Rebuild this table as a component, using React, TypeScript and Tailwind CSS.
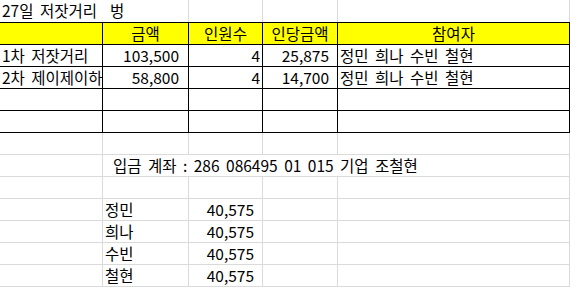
import React from "react";

type Line = "black" | "gray" | "none";

type Cell = {
  w: number;
  left?: Line;
  text?: string;
  align?: "left" | "right" | "center";
  pad?: string;
  bg?: string;
  clip?: boolean;
};

const lineCls: Record<Line, string> = {
  black: "border-l border-black",
  gray: "border-l border-[#dadada]",
  none: "",
};

const topCls: Record<Line, string> = {
  black: "border-t border-black",
  gray: "border-t border-[#dadada]",
  none: "",
};

const alignCls = {
  left: "justify-start",
  right: "justify-end",
  center: "justify-center",
};

const SheetRow = ({ top, cells }: { top: Line; cells: Cell[] }) => (
  <div className={`flex h-[22px] ${topCls[top]}`}>
    {cells.map((c, i) => (
      <div
        key={i}
        style={{ width: c.w }}
        className={`flex shrink-0 items-center whitespace-pre ${lineCls[c.left ?? "none"]} ${alignCls[c.align ?? "left"]} ${c.pad ?? "px-[2px]"} ${c.bg ?? ""} ${c.clip ? "overflow-hidden" : ""}`}
      >
        {c.text}
      </div>
    ))}
  </div>
);

// column widths: A 102, B 86, C 74, D 75, E 232, then the F edge
const blank = (g: Line): Cell[] => [
  { w: 102 },
  { w: 86, left: g },
  { w: 74, left: g },
  { w: 75, left: g },
  { w: 232, left: g },
  { w: 1, left: g },
];

const people = "정민 희나 수빈 철현";

const dataRow = (name: string, amount: string, count: string, each: string): Cell[] => [
  { w: 102, text: name, pad: "pl-[2px]", clip: true },
  { w: 86, left: "black", text: amount, align: "right", pad: "pr-[9px]" },
  { w: 74, left: "black", text: count, align: "right", pad: "pr-[2px]" },
  { w: 75, left: "black", text: each, align: "right", pad: "pr-[8px]" },
  { w: 232, left: "black", text: people, pad: "pl-[2px]" },
  { w: 1, left: "black" },
];

const payRow = (name: string): Cell[] => [
  { w: 102 },
  { w: 86, left: "gray", text: name, pad: "pl-[2px]" },
  { w: 74, left: "gray", text: "40,575", align: "right", pad: "pr-[8px]" },
  { w: 75, left: "gray" },
  { w: 232, left: "gray" },
  { w: 1, left: "gray" },
];

export default function App() {
  return (
    <div
      className="w-[570px] h-[287px] overflow-hidden bg-white text-black text-[15.5px] leading-none [word-spacing:3px]"
      style={{ fontFamily: '"Noto Sans CJK KR", "Noto Sans", sans-serif' }}
    >
      <SheetRow
        top="none"
        cells={[
          { w: 188, text: "27일 저잣거리  벙", pad: "pl-[2px]" },
          { w: 74, left: "gray" },
          { w: 75, left: "gray" },
          { w: 232, left: "gray" },
          { w: 1, left: "gray" },
        ]}
      />
      <SheetRow
        top="black"
        cells={[
          { w: 102, bg: "bg-[#ffff00]" },
          { w: 86, left: "black", text: "금액", align: "center", bg: "bg-[#ffff00]" },
          { w: 74, left: "black", text: "인원수", align: "center", bg: "bg-[#ffff00]" },
          { w: 75, left: "black", text: "인당금액", align: "center", bg: "bg-[#ffff00]" },
          { w: 232, left: "black", text: "참여자", align: "center", bg: "bg-[#ffff00]" },
          { w: 1, left: "black" },
        ]}
      />
      <SheetRow top="black" cells={dataRow("1차 저잣거리", "103,500", "4", "25,875")} />
      <SheetRow top="black" cells={dataRow("2차 제이제이하우스", "58,800", "4", "14,700")} />
      <SheetRow top="black" cells={blank("black")} />
      <SheetRow top="black" cells={blank("black")} />
      <SheetRow top="black" cells={blank("gray")} />
      <SheetRow
        top="gray"
        cells={[
          { w: 102 },
          { w: 467, left: "gray", text: "입금 계좌 : 286 086495 01 015 기업 조철현", pad: "pl-[10px]" },
          { w: 1, left: "gray" },
        ]}
      />
      <SheetRow top="gray" cells={blank("gray")} />
      <SheetRow top="gray" cells={payRow("정민")} />
      <SheetRow top="gray" cells={payRow("희나")} />
      <SheetRow top="gray" cells={payRow("수빈")} />
      <SheetRow top="gray" cells={payRow("철현")} />
      <div className="border-t border-[#dadada]" />
    </div>
  );
}
